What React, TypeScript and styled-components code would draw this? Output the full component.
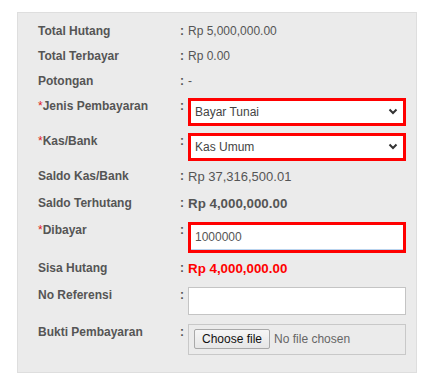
import React from "react";
import styled, { createGlobalStyle } from "styled-components";

const Global = createGlobalStyle`
  html, body { margin: 0; padding: 0; background: #ffffff; }
  body { font-family: "Liberation Sans", Arial, sans-serif; }
  * { box-sizing: border-box; }
`;

const Panel = styled.div`
  margin: 12px 0 0 17px;
  width: 400px;
  background: #ebebeb;
  border: 1px solid #dedede;
  padding: 5px 10px 15px 20px;
  display: grid;
  grid-template-columns: 142px 8px 218px;
`;

const Row = styled.div`
  display: contents;
`;

const Cell = styled.div`
  padding: 2.5px 0;
  line-height: 20px;
  font-size: 12px;
  color: #555555;
`;

const Label = styled(Cell)`
  font-weight: bold;
`;

const Colon = styled(Cell)`
  font-weight: bold;
`;

const Req = styled.span`
  color: #e0201c;
  font-weight: normal;
`;

const Value = styled(Cell)<{ $size?: number; $bold?: boolean; $color?: string }>`
  font-size: ${(p) => p.$size ?? 12}px;
  line-height: ${(p) => (p.$size && p.$size > 12 ? 22 : 20)}px;
  font-weight: ${(p) => (p.$bold ? "bold" : "normal")};
  color: ${(p) => p.$color ?? "#555555"};
`;

const FieldCell = styled(Cell)`
  padding-top: 4.5px;
`;

const SelectBox = styled.div`
  height: 28px;
  border: 3px solid #ff0000;
  background: #ffffff;
  display: flex;
  align-items: center;
  justify-content: space-between;
  padding: 0 5px 0 4px;
  font-size: 12px;
  color: #444444;
`;

const TextBox = styled.div<{ $invalid?: boolean }>`
  height: ${(p) => (p.$invalid ? 31 : 28)}px;
  margin-bottom: ${(p) => (p.$invalid ? 0 : 2)}px;
  border: ${(p) => (p.$invalid ? "3px solid #ff0000" : "1px solid #c4c4c4")};
  background: #ffffff;
  display: flex;
  align-items: center;
  padding: 0 4px;
  font-size: 12px;
  color: #555555;
  box-shadow: ${(p) => (p.$invalid ? "inset 0 -1px 0 #b9d3ee" : "none")};
`;

const FileBox = styled.div`
  height: 31px;
  border: 1px solid #c8c8c8;
  display: flex;
  align-items: center;
  gap: 4px;
  padding: 0 5px;
  font-size: 12px;
  color: #666666;
`;

const FileButton = styled.div`
  height: 20px;
  padding: 0 7px;
  border: 1px solid #a9a9a9;
  border-radius: 2px;
  background: linear-gradient(#f6f6f6, #e6e6e6);
  color: #111111;
  font-size: 12px;
  display: flex;
  align-items: center;
`;

const Chevron = () => (
  <svg width="10" height="7" viewBox="0 0 10 7">
    <polyline points="1.5,1.5 5,5 8.5,1.5" fill="none" stroke="#333" strokeWidth="2" />
  </svg>
);

export default function App() {
  return (
    <>
      <Global />
      <Panel>
        <Row>
          <Label>Total Hutang</Label>
          <Colon>:</Colon>
          <Value>Rp 5,000,000.00</Value>
        </Row>
        <Row>
          <Label>Total Terbayar</Label>
          <Colon>:</Colon>
          <Value>Rp 0.00</Value>
        </Row>
        <Row>
          <Label>Potongan</Label>
          <Colon>:</Colon>
          <Value>-</Value>
        </Row>
        <Row>
          <Label>
            <Req>*</Req>Jenis Pembayaran
          </Label>
          <Colon>:</Colon>
          <FieldCell>
            <SelectBox>
              <span>Bayar Tunai</span>
              <Chevron />
            </SelectBox>
          </FieldCell>
        </Row>
        <Row>
          <Label>
            <Req>*</Req>Kas/Bank
          </Label>
          <Colon>:</Colon>
          <FieldCell>
            <SelectBox>
              <span>Kas Umum</span>
              <Chevron />
            </SelectBox>
          </FieldCell>
        </Row>
        <Row>
          <Label>Saldo Kas/Bank</Label>
          <Colon>:</Colon>
          <Value $size={13}>Rp 37,316,500.01</Value>
        </Row>
        <Row>
          <Label>Saldo Terhutang</Label>
          <Colon>:</Colon>
          <Value $size={13.33} $bold>
            Rp 4,000,000.00
          </Value>
        </Row>
        <Row>
          <Label>
            <Req>*</Req>Dibayar
          </Label>
          <Colon>:</Colon>
          <FieldCell>
            <TextBox $invalid>1000000</TextBox>
          </FieldCell>
        </Row>
        <Row>
          <Label>Sisa Hutang</Label>
          <Colon>:</Colon>
          <Value $size={13.33} $bold $color="#ff0000">
            Rp 4,000,000.00
          </Value>
        </Row>
        <Row>
          <Label>No Referensi</Label>
          <Colon>:</Colon>
          <FieldCell>
            <TextBox />
          </FieldCell>
        </Row>
        <Row>
          <Label>Bukti Pembayaran</Label>
          <Colon>:</Colon>
          <FieldCell>
            <FileBox>
              <FileButton>Choose file</FileButton>
              <span>No file chosen</span>
            </FileBox>
          </FieldCell>
        </Row>
      </Panel>
    </>
  );
}
